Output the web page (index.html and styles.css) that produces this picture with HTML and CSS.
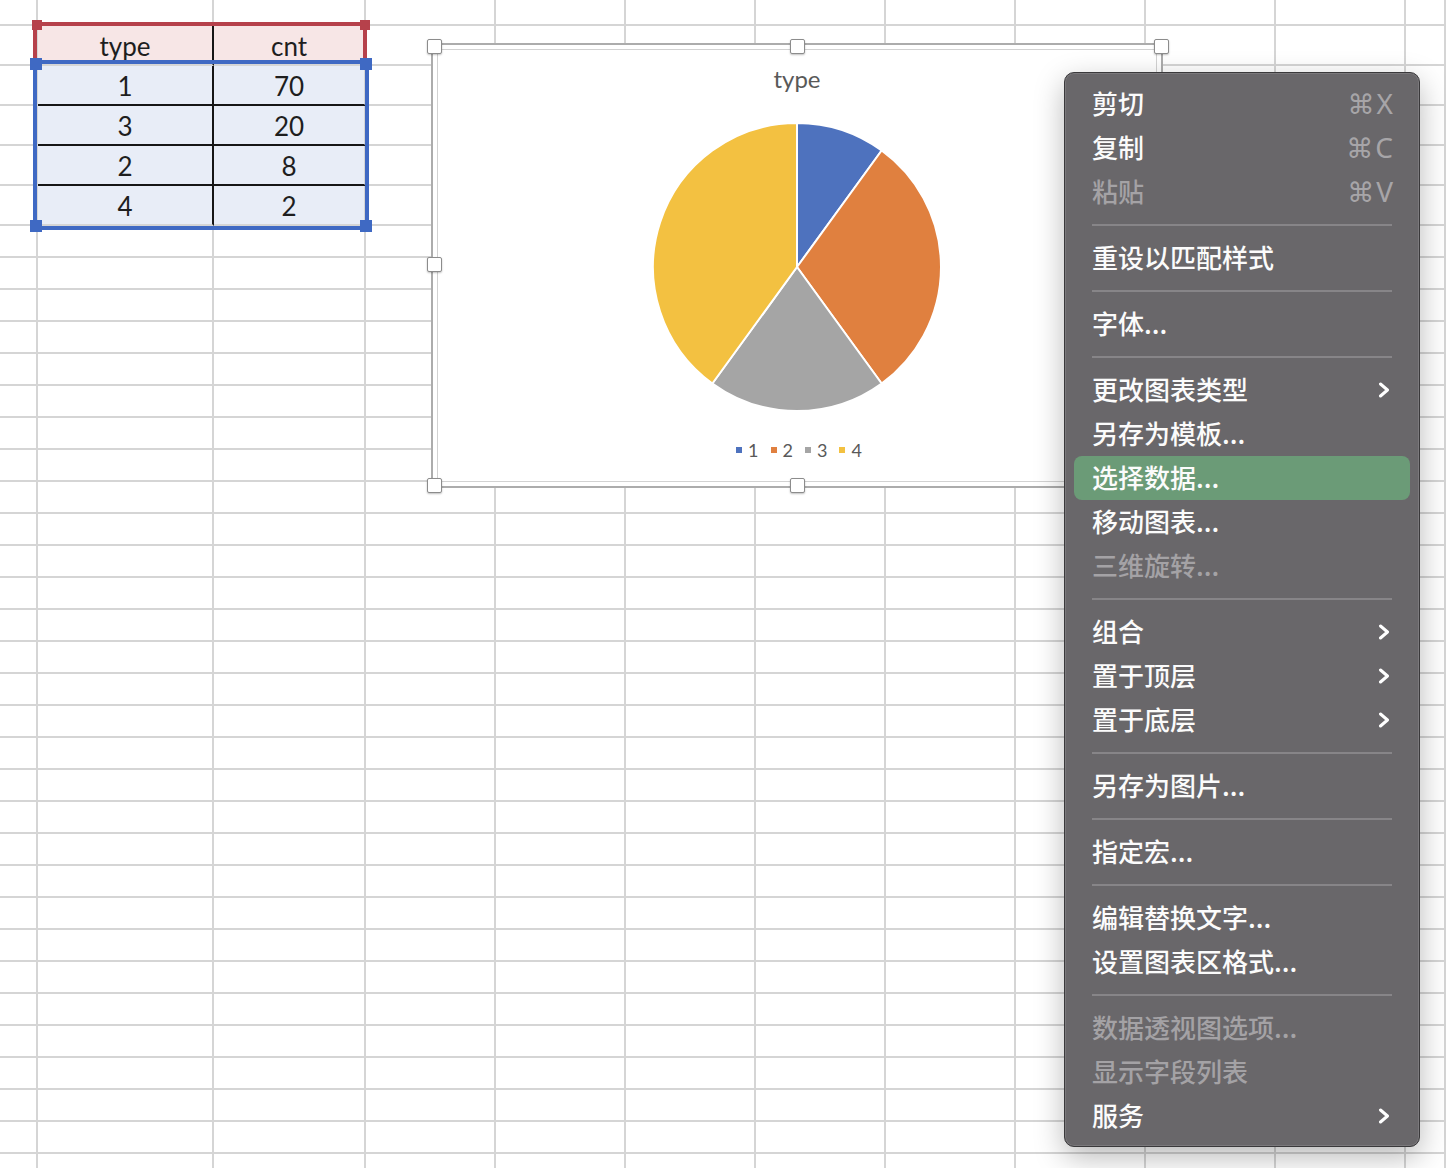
FILE: index.html
```html
<!DOCTYPE html>
<html lang="zh-CN">
<head>
  <meta charset="UTF-8" />
  <title>工作表 - 图表</title>
  <meta name="viewport" content="width=device-width, initial-scale=1.0" />
  <link rel="stylesheet" href="styles.css">
</head>
<body>
  <!-- Сетка листа -->
  <div class="sheet" id="sheet"></div>

  <!-- Выделение диапазонов -->
  <div class="sel sel-head">
    <i class="knob k-tl"></i><i class="knob k-tr"></i>
  </div>
  <div class="sel sel-data">
    <i class="knob k-tl"></i><i class="knob k-tr"></i>
    <i class="knob k-bl"></i><i class="knob k-br"></i>
  </div>

  <!-- Диаграмма -->
  <div class="chart-frame">
    <i class="grip g-tl"></i><i class="grip g-tm"></i><i class="grip g-tr"></i>
    <i class="grip g-ml"></i>
    <i class="grip g-bl"></i><i class="grip g-bm"></i>
    <div class="chart">
      <div class="chart-title">type</div>
      <svg class="pie" width="292" height="292" viewBox="0 0 292 292">
        <path d="M146 146 L146 2 A144 144 0 0 1 230.64 29.5 Z" fill="#4e72be" />
        <path d="M146 146 L230.64 29.5 A144 144 0 0 1 230.64 262.5 Z" fill="#e0803f" />
        <path d="M146 146 L230.64 262.5 A144 144 0 0 1 61.36 262.5 Z" fill="#a5a5a5" />
        <path d="M146 146 L61.36 262.5 A144 144 0 0 1 146 2 Z" fill="#f3c141" />
      </svg>
      <div class="legend">
        <span class="leg"><i class="sw" style="background:#4e72be"></i>1</span>
        <span class="leg"><i class="sw" style="background:#e0803f"></i>2</span>
        <span class="leg"><i class="sw" style="background:#a5a5a5"></i>3</span>
        <span class="leg"><i class="sw" style="background:#f3c141"></i>4</span>
      </div>
    </div>
  </div>

  <!-- Контекстное меню -->
  <div class="menu">
    <div class="item"><span>剪切</span><span class="key"><span class="cmd">⌘</span>X</span></div>
    <div class="item"><span>复制</span><span class="key"><span class="cmd">⌘</span>C</span></div>
    <div class="item off"><span>粘贴</span><span class="key"><span class="cmd">⌘</span>V</span></div>
    <div class="sep"></div>
    <div class="item"><span>重设以匹配样式</span></div>
    <div class="sep"></div>
    <div class="item"><span>字体...</span></div>
    <div class="sep"></div>
    <div class="item"><span>更改图表类型</span><svg class="chev" width="12" height="16" viewBox="0 0 12 16"><path d="M2.5 2 L9.5 8 L2.5 14" /></svg></div>
    <div class="item"><span>另存为模板...</span></div>
    <div class="item active"><span>选择数据...</span></div>
    <div class="item"><span>移动图表...</span></div>
    <div class="item off"><span>三维旋转...</span></div>
    <div class="sep"></div>
    <div class="item"><span>组合</span><svg class="chev" width="12" height="16" viewBox="0 0 12 16"><path d="M2.5 2 L9.5 8 L2.5 14" /></svg></div>
    <div class="item"><span>置于顶层</span><svg class="chev" width="12" height="16" viewBox="0 0 12 16"><path d="M2.5 2 L9.5 8 L2.5 14" /></svg></div>
    <div class="item"><span>置于底层</span><svg class="chev" width="12" height="16" viewBox="0 0 12 16"><path d="M2.5 2 L9.5 8 L2.5 14" /></svg></div>
    <div class="sep"></div>
    <div class="item"><span>另存为图片...</span></div>
    <div class="sep"></div>
    <div class="item"><span>指定宏...</span></div>
    <div class="sep"></div>
    <div class="item"><span>编辑替换文字...</span></div>
    <div class="item"><span>设置图表区格式...</span></div>
    <div class="sep"></div>
    <div class="item off"><span>数据透视图选项...</span></div>
    <div class="item off"><span>显示字段列表</span></div>
    <div class="item"><span>服务</span><svg class="chev" width="12" height="16" viewBox="0 0 12 16"><path d="M2.5 2 L9.5 8 L2.5 14" /></svg></div>
  </div>

  <script>
    // Ячейки листа
    const sheet = document.getElementById('sheet');
    const data = [['type', 'cnt'], ['1', '70'], ['3', '20'], ['2', '8'], ['4', '2']];
    const ROWS = 36, COLS = 12;

    for (let r = 0; r < ROWS; r++) {
      for (let c = 0; c < COLS; c++) {
        const cell = document.createElement('div');
        cell.className = 'cell';
        const row = data[r - 1];
        if (row && c >= 1 && c <= 2) {
          cell.classList.add(r === 1 ? 'head' : 'val');
          if (c === 1) cell.classList.add('first');
          if (r >= 2 && r <= 4) cell.classList.add('ruled');
          cell.textContent = row[c - 1];
        }
        sheet.appendChild(cell);
      }
    }
  </script>
</body>
</html>
```

FILE: styles.css
```css
* { box-sizing: border-box; margin: 0; padding: 0; }
html, body {
  width: 100%; height: 100%; overflow: hidden;
  background: #fff; font-family: "Lato", "Liberation Sans", sans-serif;
}

/* Лист */
.sheet {
  display: grid; height: 100vh; overflow: hidden;
  grid-template-columns: 38px 176px 152px repeat(8, 130px) 1fr;
  grid-template-rows: 26px repeat(5, 40px);
  grid-auto-rows: 32px;
}
.cell {
  border-right: 2px solid #d5d5d5; border-bottom: 2px solid #d5d5d5;
  display: flex; align-items: center; justify-content: center;
  font-size: 26px; color: #1e1e1e; padding-top: 2px;
}
.cell.head { background: #f7e6e6; }
.cell.val { background: #e8edf7; }
.cell.first { border-right-color: #161616; }
.cell.ruled { border-bottom-color: #161616; }

/* Выделение */
.sel { position: absolute; }
.sel-head {
  left: 33px; top: 22px; width: 334px; height: 40px;
  border: 4px solid #b6414b; border-bottom: none;
}
.sel-data {
  left: 33px; top: 60px; width: 336px; height: 170px;
  border: 4px solid #3f69c3;
}
.knob { position: absolute; display: block; }
.sel-head .knob { width: 10px; height: 10px; background: #b6414b; }
.sel-head .k-tl { left: -5px; top: -6px; }
.sel-head .k-tr { right: -7px; top: -6px; }
.sel-data .knob { width: 12px; height: 12px; background: #3f69c3; }
.sel-data .k-tl { left: -7px; top: -6px; }
.sel-data .k-tr { right: -7px; top: -6px; }
.sel-data .k-bl { left: -7px; bottom: -6px; }
.sel-data .k-br { right: -7px; bottom: -6px; }

/* Диаграмма */
.chart-frame {
  position: absolute; left: 431px; top: 43px; width: 732px; height: 445px;
  border: 2px solid #acacac; background: #fff; padding: 4px;
}
.grip {
  position: absolute; display: block; width: 15px; height: 15px;
  background: #fff; border: 1px solid #8c8c8c; border-radius: 2px;
  box-shadow: 0 1px 2px rgba(0,0,0,0.25); z-index: 2;
}
.g-tl { left: -6px; top: -6px; }
.g-tm { left: calc(50% - 7px); top: -6px; }
.g-tr { right: -8px; top: -6px; }
.g-ml { left: -6px; top: 212px; }
.g-bl { left: -6px; bottom: -7px; }
.g-bm { left: calc(50% - 7px); bottom: -7px; }

.chart {
  height: 100%; border: 1px solid #d2d2d2;
  display: flex; flex-direction: column; align-items: center;
}
.chart-title {
  padding-top: 16px; font-size: 24px; line-height: 26px; color: #595959;
}
.pie { margin-top: 29px; display: block; }
.pie path { stroke: #fff; stroke-width: 2; stroke-linejoin: round; }
.legend {
  margin-top: 28px; padding-left: 4px; display: flex; gap: 12px;
  font-size: 18px; line-height: 18px; color: #595959;
}
.leg { display: flex; align-items: center; gap: 6px; }
.sw { display: block; width: 6px; height: 6px; }

/* Меню */
.menu {
  position: absolute; left: 1064px; top: 72px; width: 356px; height: 1075px;
  background: #69676a; border: 1px solid #3a393b; border-radius: 10px;
  box-shadow: inset 0 0 0 1px rgba(255,255,255,0.12), 0 10px 30px rgba(0,0,0,0.28);
  padding: 9px 0 8px;
  font-family: "Noto Sans CJK SC", "Noto Sans", sans-serif;
}
.item {
  height: 44px; margin: 0 9px; padding: 0 18px 3px 18px;
  display: flex; align-items: center; justify-content: space-between;
  border-radius: 8px; color: #fbfbfb; font-size: 26px; font-weight: 500;
}
.item.off { color: #a4a2a5; }
.item.active { background: #6b9b77; }
.key {
  display: flex; align-items: center; margin-right: -1px;
  font-family: "Noto Sans", "DejaVu Sans", sans-serif; font-size: 28px;
  color: #a7a5a8; font-weight: 400;
}
.cmd { font-family: "DejaVu Sans", sans-serif; font-size: 27px; margin-right: 2px; margin-top: 3px; }
.chev { display: block; margin-right: 2px; margin-top: 3px; }
.chev path {
  fill: none; stroke: #fff; stroke-width: 3; stroke-linecap: round; stroke-linejoin: round;
}
.sep { height: 2px; margin: 10px 27px; background: #878588; }
```
